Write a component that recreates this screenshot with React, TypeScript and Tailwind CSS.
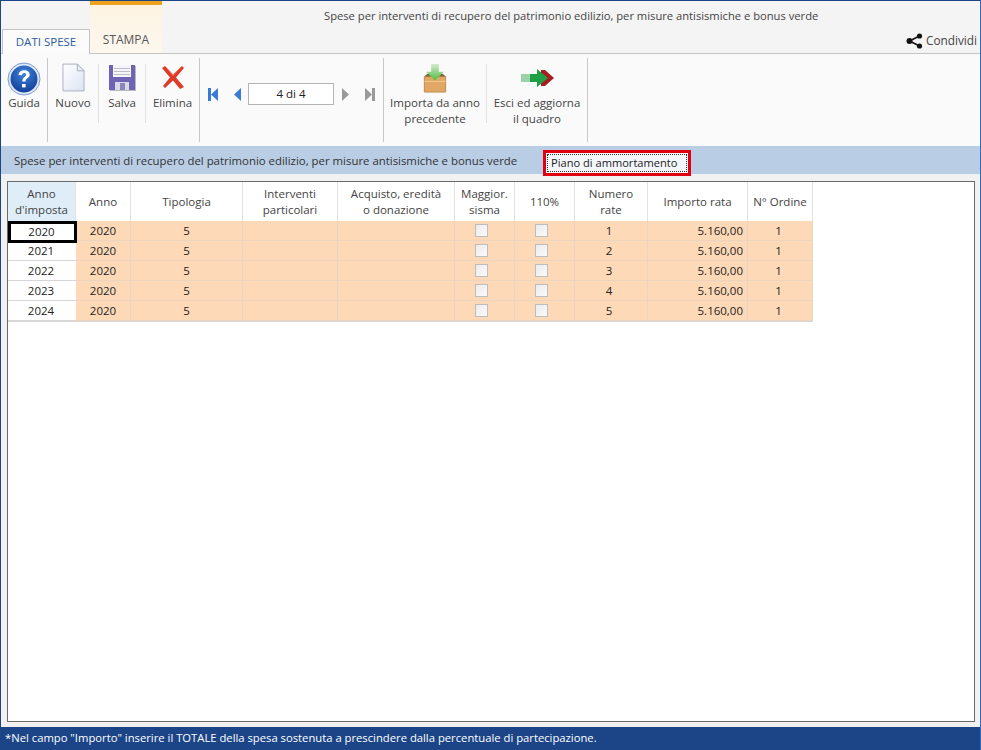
const cols = "grid grid-cols-[68px_55px_112px_95px_117px_60px_60px_73px_100px_65px]";

const headers = [
  ["Anno", "d'imposta"],
  ["Anno"],
  ["Tipologia"],
  ["Interventi", "particolari"],
  ["Acquisto, eredità", "o donazione"],
  ["Maggior.", "sisma"],
  ["110%"],
  ["Numero", "rate"],
  ["Importo rata"],
  ["N° Ordine"],
];

const rows = [
  { year: "2020", n: "1" },
  { year: "2021", n: "2" },
  { year: "2022", n: "3" },
  { year: "2023", n: "4" },
  { year: "2024", n: "5" },
];

function HelpIcon() {
  return (
    <svg width="34" height="34" viewBox="0 0 34 34">
      <defs>
        <radialGradient id="help" cx="50%" cy="30%" r="75%">
          <stop offset="0%" stopColor="#3f83dc" />
          <stop offset="100%" stopColor="#0f3b94" />
        </radialGradient>
      </defs>
      <circle cx="17" cy="17" r="16" fill="#dfe8f6" stroke="#7d9ccb" />
      <circle cx="17" cy="17" r="13.5" fill="url(#help)" />
      <path d="M11.5 13c.5-3.5 3-4.8 5.800-4.800 3.200 0 5.400 1.800 5.400 4.400 0 3.600-4.200 3.600-4.200 7h-3.200c0-4.600 3.800-4.600 3.800-6.800 0-1-.8-1.700-1.900-1.700-1.200 0-2 .8-2.200 2.200z" fill="#fff" />
      <rect x="15" y="22" width="3.600" height="3.400" fill="#fff" />
    </svg>
  );
}

function PageIcon() {
  return (
    <svg width="23" height="29" viewBox="0 0 24 30">
      <defs>
        <linearGradient id="page" x1="0" y1="0" x2="1" y2="1">
          <stop offset="0%" stopColor="#ffffff" />
          <stop offset="100%" stopColor="#dbe3f3" />
        </linearGradient>
      </defs>
      <path d="M1 1h15l7 7v21H1z" fill="url(#page)" stroke="#a9afbb" />
      <path d="M16 1v7h7z" fill="#eceff5" stroke="#a9afbb" />
    </svg>
  );
}

function SaveIcon() {
  return (
    <svg width="27" height="26" viewBox="0 0 27 26">
      <path d="M0 0h26v25H0z" fill="#6f64b4" />
      <path d="M26 1h1v25H1v-1h25z" fill="#b9b9c4" />
      <rect x="4" y="0" width="18" height="12" fill="#f6f6f8" />
      <path d="M5 3.500h16M5 6.500h16M5 9.500h16" stroke="#bcbccb" />
      <rect x="6" y="17" width="14" height="8" fill="#d9d8e8" />
      <rect x="11" y="18" width="5" height="7" fill="#8c86b8" />
    </svg>
  );
}

function DeleteIcon() {
  return (
    <svg width="24" height="25" viewBox="0 0 24 25">
      <path d="M1 3L4 1L12 9.500L21 1L23 3L15 12.500L23 22L19 24L12 15.500L4 23L2 21L9 12.500Z" fill="#dd3b28" />
      <path d="M4 1L12 9.500L21 1L12 11Z" fill="#f0806c" />
    </svg>
  );
}

function ImportIcon() {
  return (
    <svg width="24" height="30" viewBox="0 0 24 31">
      <defs>
        <linearGradient id="arrow" x1="0" y1="0" x2="0" y2="1">
          <stop offset="0%" stopColor="#d5ead0" />
          <stop offset="100%" stopColor="#4fbd3c" />
        </linearGradient>
      </defs>
      <path d="M1 14h22v16H1z" fill="#e0a864" stroke="#c08a4a" />
      <path d="M1 14l3-3h16l3 3z" fill="#7a6a3c" />
      <path d="M1 19h22" stroke="#f3c88e" />
      <path d="M8 1h8v8h5l-9 9-9-9h5z" fill="url(#arrow)" />
    </svg>
  );
}

function ExitIcon() {
  return (
    <svg width="33" height="18" viewBox="0 0 33 18">
      <path d="M20 1h4l9 8-9 8h-4z" fill="#a81e20" />
      <path d="M16 0l11 9-11 9v-5H8V5h8z" fill="#1fa046" />
      <rect x="0" y="5" width="9" height="8" fill="#9bd2a8" />
    </svg>
  );
}

function ShareIcon() {
  return (
    <svg width="17" height="16" viewBox="0 0 17 16">
      <path d="M13.500 3L3.500 8l10 5" fill="none" stroke="#111" strokeWidth="1.600" />
      <circle cx="13.500" cy="3" r="2.600" fill="#111" />
      <circle cx="3.500" cy="8" r="3" fill="#111" />
      <circle cx="13.500" cy="13" r="2.600" fill="#111" />
    </svg>
  );
}

function NavIcon({ dir, bar, color }: { dir: "left" | "right"; bar?: boolean; color: string }) {
  return (
    <svg width="10" height="13" viewBox="0 0 10 13">
      {dir === "left" ? (
        <>
          {bar && <rect x="0" y="0" width="3" height="13" fill={color} />}
          <path d="M10 0v13L3 6.500z" fill={color} />
        </>
      ) : (
        <>
          <path d="M0 0v13l7-6.500z" fill={color} />
          {bar && <rect x="7" y="0" width="3" height="13" fill={color} />}
        </>
      )}
    </svg>
  );
}

function ToolButton({ width, label, icon, iconPad }: { width: string; label: string[]; icon: React.ReactNode; iconPad: string }) {
  return (
    <div className={`${width} flex shrink-0 flex-col items-center`}>
      <div className={`flex h-[42px] items-end justify-center ${iconPad}`}>{icon}</div>
      <div className="mt-[-1px] text-center leading-[16px] text-[#444]">
        {label.map((l) => (
          <div key={l} className="whitespace-nowrap">{l}</div>
        ))}
      </div>
    </div>
  );
}

function MajorSep() {
  return <div className="mt-[4px] h-[84px] w-px shrink-0 bg-[#c8c8c8]" />;
}

function MinorSep() {
  return <div className="mt-[10px] h-[59px] w-px shrink-0 bg-[#e2e2e2]" />;
}

export default function App() {
  return (
    <div className="flex h-[750px] w-[981px] flex-col overflow-hidden border-l border-r border-t border-l-[#1c4587] border-r-[#2f6bc0] border-t-[#1c4587] bg-[#f1f1f1] font-['Open_Sans',sans-serif] text-[11.5px] text-[#333]">
      {/* Title bar and tabs */}
      <div className="flex h-[53px] shrink-0 border-b border-[#c4c4c4] bg-[#f4f4f4]">
        <div className="flex items-end pl-[1px]">
          <div className="mb-[-1px] flex h-[25px] w-[88px] items-center justify-center border border-b-0 border-[#c4c4c4] bg-[#fbfbfb] text-[#2c5d9c]">
            DATI SPESE
          </div>
          <div className="flex h-[52px] w-[72px] flex-col bg-gradient-to-b from-[#fdf3e1] to-[#fdf7ee] pb-[1px]">
            <div className="h-[4px] bg-[#eba21f]" />
            <div className="flex flex-1 items-end justify-center pb-[3px] text-[12px] text-[#555]">STAMPA</div>
          </div>
        </div>
        <div className="flex flex-1 flex-col">
          <div className="pl-[162px] pt-[7px] text-[11.2px] whitespace-nowrap leading-[16px] text-[#444]">
            Spese per interventi di recupero del patrimonio edilizio, per misure antisismiche e bonus verde
          </div>
          <div className="mt-auto flex items-center justify-end gap-[3px] pb-[3px] pr-[3px] text-[#444]">
            <ShareIcon />
            <span className="text-[11.8px]">Condividi</span>
          </div>
        </div>
      </div>

      {/* Toolbar */}
      <div className="flex h-[92px] shrink-0 bg-[#fafafa]">
        <ToolButton width="w-[46px]" label={["Guida"]} icon={<HelpIcon />} iconPad="pb-0" />
        <MajorSep />
        <ToolButton width="w-[50px]" label={["Nuovo"]} icon={<PageIcon />} iconPad="pb-[4px]" />
        <MinorSep />
        <ToolButton width="w-[46px]" label={["Salva"]} icon={<SaveIcon />} iconPad="pb-[5px]" />
        <MinorSep />
        <ToolButton width="w-[53px]" label={["Elimina"]} icon={<DeleteIcon />} iconPad="pb-[6px]" />
        <MajorSep />
        <div className="flex h-[80px] w-[183px] shrink-0 items-center pl-[8px]">
          <NavIcon dir="left" bar color="#3b79d8" />
          <div className="ml-[13px]">
            <NavIcon dir="left" color="#3b79d8" />
          </div>
          <div className="ml-[7px] flex h-[22px] w-[86px] items-center justify-center border border-[#b5b5b5] bg-white text-[#222]">
            4 di 4
          </div>
          <div className="ml-[8px]">
            <NavIcon dir="right" color="#9a9a9a" />
          </div>
          <div className="ml-[13px]">
            <NavIcon dir="right" bar color="#9a9a9a" />
          </div>
        </div>
        <MajorSep />
        <ToolButton width="w-[102px]" label={["Importa da anno", "precedente"]} icon={<ImportIcon />} iconPad="pb-[3px]" />
        <MinorSep />
        <ToolButton width="w-[100px]" label={["Esci ed aggiorna", "il quadro"]} icon={<ExitIcon />} iconPad="pb-[9px]" />
        <MajorSep />
      </div>

      {/* Section strip */}
      <div className="flex h-[28px] shrink-0 items-start bg-[#b9cde5] pl-[13px] pt-[4px]">
        <div className="w-[529px] whitespace-nowrap text-[11.4px] leading-[21px] text-[#333]">
          Spese per interventi di recupero del patrimonio edilizio, per misure antisismiche e bonus verde
        </div>
        <div className="h-[26px] w-[148px] border-[3px] border-[#e00012] bg-[#f4f7fb] p-[1px]">
          <div className="h-[18px] border border-dotted border-[#333] pl-[3px] text-[11.1px] leading-[15px] text-[#222]">
            Piano di ammortamento
          </div>
        </div>
      </div>

      {/* Grid */}
      <div className="flex min-h-0 flex-1 flex-col pb-[5px] pl-[6px] pr-[5px] pt-[7px]">
        <div className="flex-1 border border-[#6a6a6a] bg-white">
          <div className="w-[805px] border-b border-[#d6d6d6]">
            <div className={cols}>
              {headers.map((h, i) => (
                <div
                  key={i}
                  className={`flex h-[39px] flex-col items-center justify-center border-r border-[#e2e2e2] leading-[16px] text-[#444] ${i === 0 ? "bg-[#deedf8]" : "bg-white"}`}
                >
                  {h.map((l) => (
                    <span key={l} className="whitespace-nowrap">{l}</span>
                  ))}
                </div>
              ))}
            </div>
            {rows.map((r, i) => (
              <div key={r.year} className={`${cols} h-[20px] grid-rows-[20px] leading-[20px] text-[#222]`}>
                <div className={`pr-[2px] text-center ${i === 0 ? "z-10 h-[22px] w-[69px] border-[3px] border-black bg-white leading-[16px]" : "border-b border-[#d6d6d6] bg-white"}`}>
                  {r.year}
                </div>
                <div className="border-b border-r border-[#ecd4c0] bg-[#fdd9b7] text-center">2020</div>
                <div className="border-b border-r border-[#ecd4c0] bg-[#fdd9b7] text-center">5</div>
                <div className="border-b border-r border-[#ecd4c0] bg-[#fdd9b7]" />
                <div className="border-b border-r border-[#ecd4c0] bg-[#fdd9b7]" />
                <div className="flex items-start justify-center border-b border-r border-[#ecd4c0] bg-[#fdd9b7] pr-[6px] pt-[3px]">
                  <div className="h-[13px] w-[13px] border border-[#bdbdbd] bg-gradient-to-br from-[#ececec] to-[#fafafa]" />
                </div>
                <div className="flex items-start justify-center border-b border-r border-[#ecd4c0] bg-[#fdd9b7] pr-[6px] pt-[3px]">
                  <div className="h-[13px] w-[13px] border border-[#bdbdbd] bg-gradient-to-br from-[#ececec] to-[#fafafa]" />
                </div>
                <div className="border-b border-r border-[#ecd4c0] bg-[#fdd9b7] pr-[4px] text-center">{r.n}</div>
                <div className="border-b border-r border-[#ecd4c0] bg-[#fdd9b7] pr-[4px] text-right">5.160,00</div>
                <div className="border-b border-r border-[#ecd4c0] bg-[#fdd9b7] pr-[3px] text-center">1</div>
              </div>
            ))}
          </div>
        </div>
      </div>

      {/* Footer note */}
      <div className="flex h-[23px] shrink-0 items-center whitespace-nowrap bg-[#1c4587] pl-[4px] text-[11.25px] text-white">
        *Nel campo "Importo" inserire il TOTALE della spesa sostenuta a prescindere dalla percentuale di partecipazione.
      </div>
    </div>
  );
}
